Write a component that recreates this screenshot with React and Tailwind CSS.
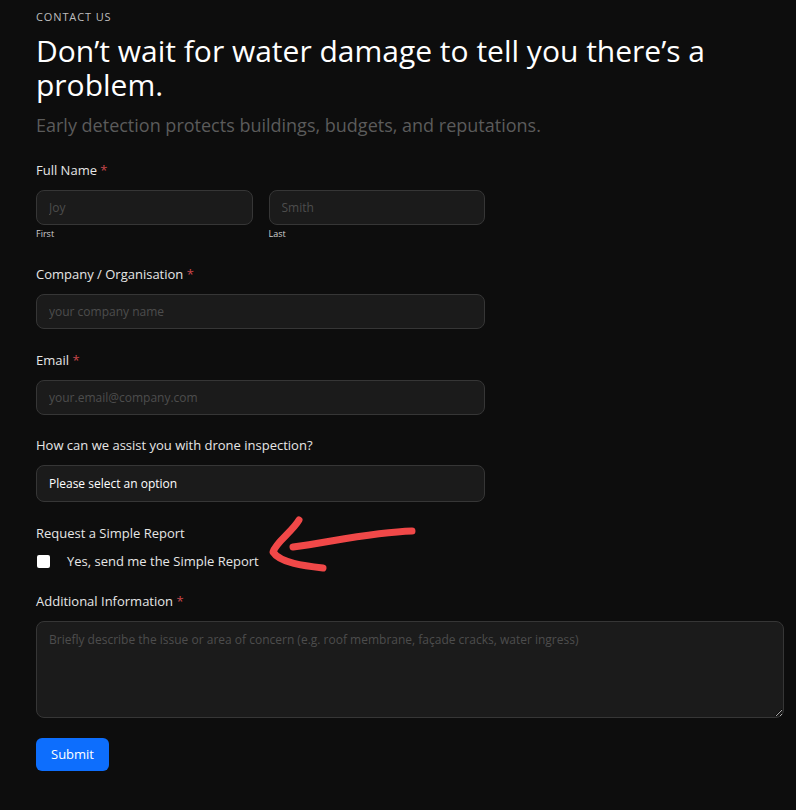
import React from "react";

const Req = () => <span className="text-[#c9474b]"> *</span>;

export default function App() {
  return (
    <div
      className="relative min-h-[810px] bg-[#0d0d0d] text-white pl-9 pr-3 pt-[10px]"
      style={{ fontFamily: '"Open Sans", "Noto Sans", sans-serif' }}
    >
      <p className="text-[11px] tracking-[0.08em] text-[#bdbdbd] leading-[14px]">CONTACT US</p>
      <h1 className="mt-[10px] text-[30px] leading-[34px] text-white max-w-[720px]">
        Don’t wait for water damage to tell you there’s a problem.
      </h1>
      <p className="mt-[11px] text-[18px] leading-[24px] text-[#5b5b5b]">
        Early detection protects buildings, budgets, and reputations.
      </p>

      <form className="mt-[24px]">
        <div className="max-w-[449px]">
          <label className="block text-[13px] leading-[18px] text-[#e6e6e6]">
            Full Name<Req />
          </label>
          <div className="mt-[11px] grid grid-cols-2 gap-4">
            <div>
              <input
                placeholder="Joy"
                className="w-full h-[35px] rounded-lg border border-[#363636] bg-[#1b1b1b] px-3 text-[12px] placeholder:text-[#4d4d4d] outline-none"
              />
              <span className="block mt-[3px] text-[9px] leading-[12px] text-[#d0d0d0]">First</span>
            </div>
            <div>
              <input
                placeholder="Smith"
                className="w-full h-[35px] rounded-lg border border-[#363636] bg-[#1b1b1b] px-3 text-[12px] placeholder:text-[#4d4d4d] outline-none"
              />
              <span className="block mt-[3px] text-[9px] leading-[12px] text-[#d0d0d0]">Last</span>
            </div>
          </div>

          <label className="mt-[25px] block text-[13px] leading-[18px] text-[#e6e6e6]">
            Company / Organisation<Req />
          </label>
          <input
            placeholder="your company name"
            className="mt-[11px] w-full h-[35px] rounded-lg border border-[#363636] bg-[#1b1b1b] px-3 text-[12px] placeholder:text-[#4d4d4d] outline-none"
          />

          <label className="mt-[22px] block text-[13px] leading-[18px] text-[#e6e6e6]">
            Email<Req />
          </label>
          <input
            placeholder="your.email@company.com"
            className="mt-[11px] w-full h-[35px] rounded-lg border border-[#363636] bg-[#1b1b1b] px-3 text-[12px] placeholder:text-[#4d4d4d] outline-none"
          />

          <label className="mt-[21px] block text-[13px] leading-[18px] text-[#e6e6e6]">
            How can we assist you with drone inspection?
          </label>
          <div className="mt-[11px] w-full h-[37px] rounded-lg border border-[#363636] bg-[#1b1b1b] px-3 flex items-center text-[12px] text-white">
            Please select an option
          </div>

          <p className="mt-[22px] text-[13px] leading-[18px] text-[#e6e6e6]">Request a Simple Report</p>
          <label className="mt-[10px] flex items-center text-[13px] leading-[18px] text-[#e6e6e6]">
            <span className="ml-px w-[13px] h-[13px] rounded-[2px] bg-white" />
            <span className="ml-[17px]">Yes, send me the Simple Report</span>
          </label>
        </div>

        <label className="mt-[22px] block text-[13px] leading-[18px] text-[#e6e6e6]">
          Additional Information<Req />
        </label>
        <textarea
          placeholder="Briefly describe the issue or area of concern (e.g. roof membrane, façade cracks, water ingress)"
          className="mt-[11px] block w-full h-[97px] rounded-lg border border-[#363636] bg-[#1b1b1b] px-3 py-[9px] text-[12px] placeholder:text-[#4d4d4d] outline-none"
        />

        <button
          type="button"
          className="mt-[20px] h-[33px] px-[15px] rounded-md bg-[#0d6efd] text-[13px] text-white"
        >
          Submit
        </button>
      </form>

      <svg
        className="absolute left-[260px] top-[510px]"
        width="170"
        height="80"
        viewBox="0 0 170 80"
        fill="none"
        stroke="#f04848"
        strokeWidth="7"
        strokeLinecap="round"
        strokeLinejoin="round"
      >
        <path d="M152 21 C 115 22 75 31 33 37" />
        <path d="M39 10 C 32 22 16 32 13 42 C 20 53 45 56 63 58" />
      </svg>
    </div>
  );
}
